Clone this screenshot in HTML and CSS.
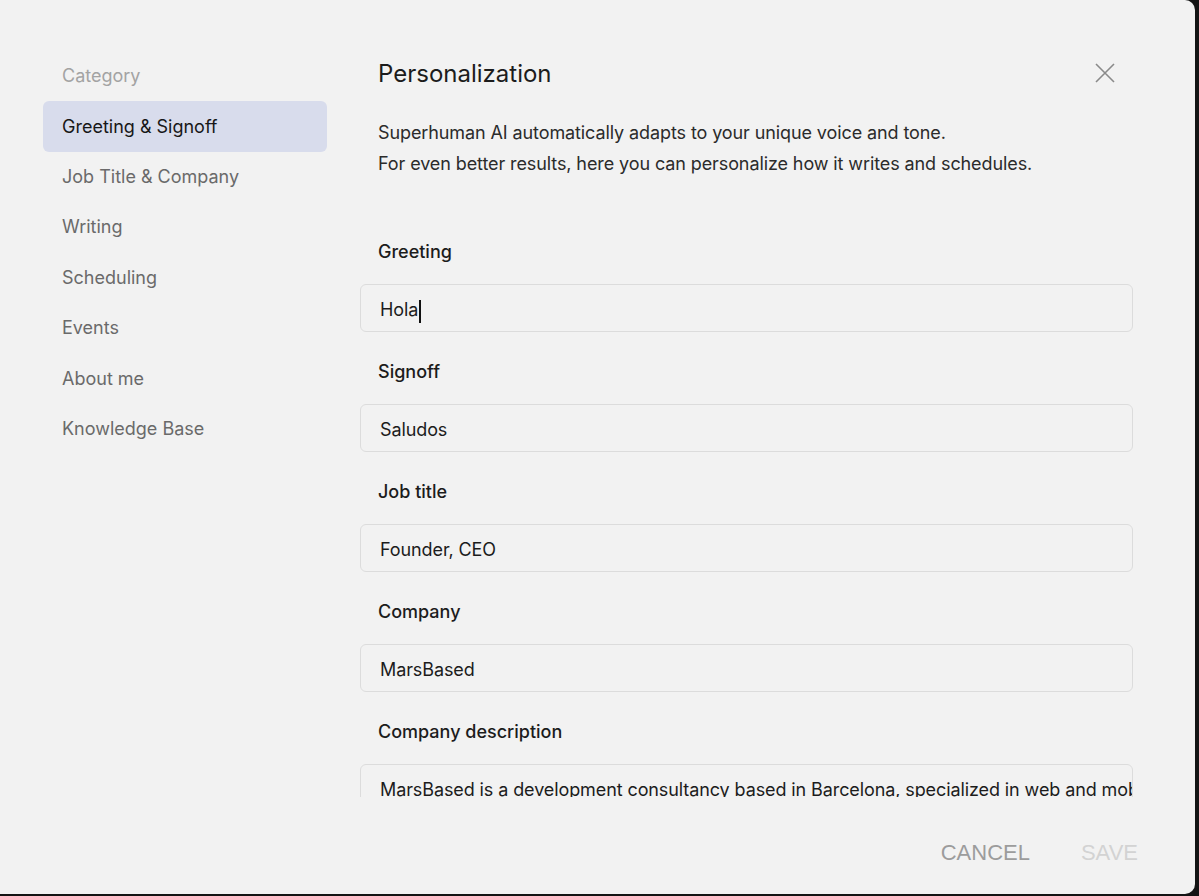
FILE: index.html
```html
<!DOCTYPE html>
<html lang="en">
<head>
    <meta charset="UTF-8">
    <meta name="viewport" content="width=device-width, initial-scale=1.0">
    <title>Personalization</title>
    <link rel="stylesheet" href="styles.css">
</head>
<body>
    <div class="modal">
        <ul class="sidebar">
            <li class="cat">Category</li>
            <li class="on">Greeting &amp; Signoff</li>
            <li>Job Title &amp; Company</li>
            <li>Writing</li>
            <li>Scheduling</li>
            <li>Events</li>
            <li>About me</li>
            <li>Knowledge Base</li>
        </ul>
        <div class="main">
            <div class="head">
                <h1>Personalization</h1>
                <p class="intro">Superhuman AI automatically adapts to your unique voice and tone.<br>For even better results, here you can personalize how it writes and schedules.</p>
                <span class="close">
                    <svg width="22" height="22" viewBox="0 0 22 22"><path d="M2 2L20 20M20 2L2 20" stroke="#8a8a8a" stroke-width="1.6" fill="none"/></svg>
                </span>
            </div>
            <div class="fields">
                <div class="field">
                    <label>Greeting</label>
                    <div class="box">Hola<span class="caret"></span></div>
                </div>
                <div class="field">
                    <label>Signoff</label>
                    <div class="box">Saludos</div>
                </div>
                <div class="field">
                    <label>Job title</label>
                    <div class="box">Founder, CEO</div>
                </div>
                <div class="field">
                    <label>Company</label>
                    <div class="box">MarsBased</div>
                </div>
                <div class="field">
                    <label>Company description</label>
                    <div class="box">MarsBased is a development consultancy based in Barcelona, specialized in web and mobile development.</div>
                </div>
            </div>
            <div class="foot">
                <span class="btn cancel">CANCEL</span>
                <span class="btn save">SAVE</span>
            </div>
        </div>
    </div>
</body>
</html>
```

FILE: styles.css
```css
*{
    margin: 0;
    padding: 0;
    list-style: none;
    box-sizing: border-box;
}
body{
    background: #141414;
    font-family: Inter, "Noto Sans", sans-serif;
    color: #1c1c1c;
}
.modal{
    display: flex;
    width: 1195px;
    height: 894px;
    background: #f2f2f2;
    border-radius: 0 10px 10px 0;
    overflow: hidden;
}
.sidebar{
    width: 327px;
    padding: 51px 0 0 43px;
    flex-shrink: 0;
}
.sidebar li{
    height: 50.5px;
    line-height: 50.5px;
    padding-left: 19px;
    font-size: 18px;
    color: #6a6a6a;
    border-radius: 6px;
}
.sidebar li.cat{
    color: #a3a3a3;
}
.sidebar li.on{
    color: #171717;
    background: #d8dcec;
    margin-top: -1px;
    padding-top: 1px;
    height: 51px;
}
.main{
    width: 773px;
    margin-left: 33px;
    display: flex;
    flex-direction: column;
}
.head{
    position: relative;
    padding: 58px 0 0 18px;
}
.head h1{
    font-size: 24px;
    font-weight: 400;
    line-height: 32px;
}
.intro{
    margin-top: 27px;
    font-size: 18px;
    line-height: 31px;
    letter-spacing: -0.1px;
    color: #2b2b2b;
}
.close{
    position: absolute;
    top: 62px;
    right: 17px;
    width: 22px;
    height: 22px;
}
.fields{
    height: 618px;
    overflow: hidden;
    padding-top: 61px;
}
.field{
    margin-bottom: 28px;
}
.field label{
    display: block;
    padding-left: 18px;
    font-size: 18px;
    font-weight: 500;
    line-height: 24px;
    margin-bottom: 20px;
}
.box{
    height: 48px;
    line-height: 46px;
    padding: 2px 19px 0;
    border: 1.5px solid #dcdcdc;
    border-radius: 6px;
    font-size: 18px;
    letter-spacing: -0.1px;
    white-space: nowrap;
    overflow: hidden;
}
.caret{
    display: inline-block;
    width: 1.5px;
    height: 23px;
    background: #111;
    vertical-align: middle;
    margin-left: 1px;
}
.foot{
    display: flex;
    justify-content: flex-end;
    align-items: center;
    gap: 51px;
    padding-top: 43px;
    margin-right: -5px;
}
.btn{
    font-family: "Liberation Sans", Arial, sans-serif;
    font-size: 22px;
    line-height: 26px;
}
.cancel{
    color: #9c9c9c;
}
.save{
    color: #d3d3d3;
}
```
